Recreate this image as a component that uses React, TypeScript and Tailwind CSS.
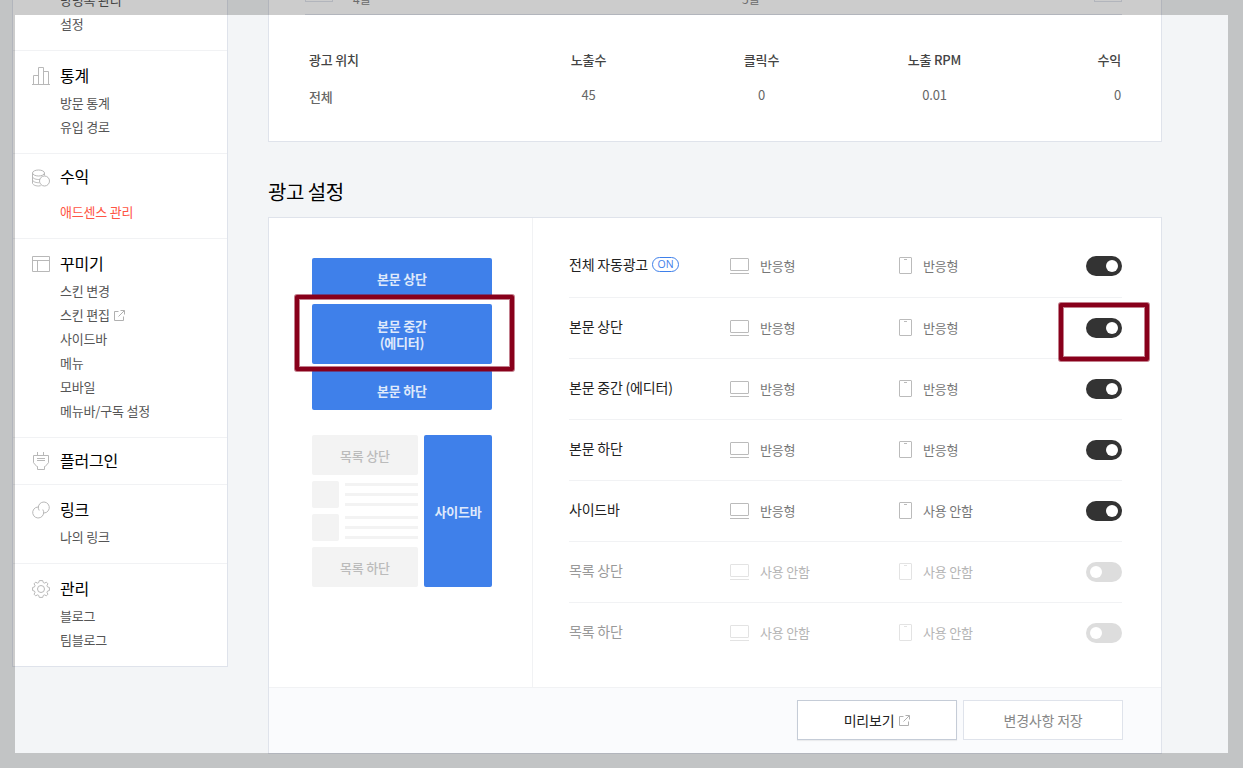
import React from "react";

type MenuItem = { label: string; active?: boolean; external?: boolean };

type MenuSection = {
  title: string;
  icon: React.ReactNode;
  items: MenuItem[];
  headClass?: string;
};

const ExternalIcon = ({ className = "" }: { className?: string }) => (
  <svg
    className={className}
    width="11"
    height="11"
    viewBox="0 0 11 11"
    fill="none"
    stroke="#b0b0b0"
  >
    <path d="M4.500 1.500h-4v9h9V6.500" />
    <path d="M6.500.5h4v4M10.300.7L4.500 6.500" />
  </svg>
);

const iconProps = {
  width: 18,
  height: 18,
  viewBox: "0 0 18 18",
  fill: "none",
  stroke: "#b8b8b8",
};

const StatsIcon = () => (
  <svg {...iconProps}>
    <path d="M0 17.5h18M1.5 17V8.5h5M6.5 17V.5h5V17M11.5 4.5h5V17" />
  </svg>
);

const CoinsIcon = () => (
  <svg {...iconProps} className="relative top-px">
    <ellipse cx="6.5" cy="4" rx="6" ry="3" />
    <path d="M.5 4v10c0 1.600 2.700 3 6 3 .8 0 1.500-.1 2.200-.3M.5 7.500c0 1.600 2.700 3 6 3 .6 0 1.100 0 1.600-.1M.5 10.700c0 1.600 2.700 3 6 3h.8M12.500 4V6.500" />
    <circle cx="12.500" cy="12" r="5" />
  </svg>
);

const SkinIcon = () => (
  <svg {...iconProps}>
    <path d="M.5 1.5h17v15H.5zM.5 5.5h17M5.500 5.500v11" />
  </svg>
);

const PluginIcon = () => (
  <svg {...iconProps}>
    <path d="M5.500 0v3.500M11.500 0v3.500M1.500 3.500h15v7.200l-3.300 3.800h-.7v3h-7v-3h-.7L1.500 10.700zM5 6.500h8M5 8.500h8" />
  </svg>
);

const LinkIcon = () => (
  <svg {...iconProps}>
    <path d="M7.200 9.500A5.500 5.500 0 1 1 12 12" />
    <path d="M10.800 8.500A5.500 5.500 0 1 1 6 6" />
  </svg>
);

const GearIcon = () => (
  <svg {...iconProps}>
    <circle cx="9" cy="9" r="3.500" />
    <path d="M7.300.6h3.400l.6 2 1.200.5 1.900-.9 1.500 1.600-.9 1.800.5 1.300 1.900.6v3l-1.900.6-.5 1.300.9 1.800-1.500 1.600-1.900-.9-1.200.5-.6 2H7.300l-.6-2-1.200-.5-1.900.9-1.500-1.600.9-1.800-.5-1.300-1.900-.6v-3l1.900-.6.5-1.300-.9-1.800 1.500-1.600 1.900.9 1.200-.5z" />
  </svg>
);

const sections: MenuSection[] = [
  {
    title: "통계",
    icon: <StatsIcon />,
    items: [{ label: "방문 통계" }, { label: "유입 경로" }],
  },
  {
    title: "수익",
    icon: <CoinsIcon />,
    items: [{ label: "애드센스 관리", active: true }],
    headClass: "-mt-0.5 mb-2",
  },
  {
    title: "꾸미기",
    icon: <SkinIcon />,
    items: [
      { label: "스킨 변경" },
      { label: "스킨 편집", external: true },
      { label: "사이드바" },
      { label: "메뉴" },
      { label: "모바일" },
      { label: "메뉴바/구독 설정" },
    ],
  },
  {
    title: "플러그인",
    icon: <PluginIcon />,
    items: [],
    headClass: "-mt-0.5 -mb-1.5",
  },
  { title: "링크", icon: <LinkIcon />, items: [{ label: "나의 링크" }] },
  {
    title: "관리",
    icon: <GearIcon />,
    items: [{ label: "블로그" }, { label: "팀블로그" }],
  },
];

const MenuLink = ({ item }: { item: MenuItem }) => (
  <li
    className={`flex items-center pl-[47px] text-[13px] leading-6 ${
      item.active ? "text-[#ff5544]" : "text-[#555]"
    }`}
  >
    {item.label}
    {item.external && <ExternalIcon className="ml-1" />}
  </li>
);

const Sidebar = () => (
  <aside className="-mt-3 w-[216px] shrink-0 self-start border border-t-0 border-[#dfe3eb] bg-white">
    <ul className="border-b border-[#f1f2f4] pb-3.5">
      <MenuLink item={{ label: "방명록 관리" }} />
      <MenuLink item={{ label: "설정" }} />
    </ul>
    {sections.map((section) => (
      <div
        key={section.title}
        className="border-b border-[#f1f2f4] pt-3.5 pb-3.5 last:border-b-0"
      >
        <div
          className={`flex h-[26px] items-start pl-[19px] ${section.headClass ?? ""}`}
        >
          <span className="mt-0.5 w-7">{section.icon}</span>
          <h3 className="text-base leading-5 text-black">{section.title}</h3>
        </div>
        <ul>
          {section.items.map((item) => (
            <MenuLink key={item.label} item={item} />
          ))}
        </ul>
      </div>
    ))}
  </aside>
);

const Report = () => (
  <section className="h-[142px] border-x border-b border-[#dfe3eb] bg-white pr-[39px] pl-9">
    <div className="flex h-[15px] items-start border-b border-[#dfe3eb] text-xs leading-5 text-[#888]">
      <span className="-mt-[26px] h-7 w-7 border border-[#dfe3eb]" />
      <span className="-mt-[11px] ml-5 w-[389px]">4월</span>
      <span className="-mt-[11px]">5월</span>
      <span className="-mt-[26px] ml-auto h-7 w-7 border border-[#dfe3eb]" />
    </div>
    <div className="mt-[33px] ml-1 grid grid-cols-[193px_173px_173px_173px_100px] text-center text-[13px] leading-6 font-medium text-[#444]">
      <span className="text-left">광고 위치</span>
      <span>노출수</span>
      <span>클릭수</span>
      <span>노출 RPM</span>
      <span className="text-right">수익</span>
    </div>
    <div className="mt-[11px] ml-1 grid grid-cols-[193px_173px_173px_173px_100px] text-center text-[13px] leading-6 text-[#666]">
      <span className="mt-0.5 text-left font-medium">전체</span>
      <span>45</span>
      <span>0</span>
      <span>0.01</span>
      <span className="text-right">0</span>
    </div>
  </section>
);

const ListLines = () => (
  <div className="flex h-[27px] gap-1.5">
    <div className="w-[27px] rounded-xs bg-[#f3f3f3]" />
    <div className="flex flex-1 flex-col gap-[7px] pt-0.5">
      <div className="h-[3px] bg-[#f3f3f3]" />
      <div className="h-[3px] bg-[#f3f3f3]" />
      <div className="h-[3px] bg-[#f3f3f3]" />
    </div>
  </div>
);

const Placement = () => (
  <div className="w-[264px] border-r border-[#f1f2f4] pt-10 pl-[43px] text-[13px] leading-[17px] font-bold text-[#dfe9fb]">
    <div className="flex w-[180px] flex-col gap-1.5 text-center">
      <div className="flex h-10 items-center justify-center rounded-xs bg-[#3f80ea]">
        본문 상단
      </div>
      <div className="flex h-[60px] items-center justify-center rounded-xs bg-[#3f80ea]">
        본문 중간
        <br />
        (에디터)
      </div>
      <div className="flex h-10 items-center justify-center rounded-xs bg-[#3f80ea]">
        본문 하단
      </div>
    </div>
    <div className="mt-[25px] flex h-[152px] w-[180px] gap-1.5">
      <div className="flex w-[106px] flex-col gap-1.5">
        <div className="flex h-10 items-center justify-center rounded-xs bg-[#f3f3f3] font-medium text-[#bbb]">
          목록 상단
        </div>
        <ListLines />
        <ListLines />
        <div className="flex h-10 items-center justify-center rounded-xs bg-[#f3f3f3] font-medium text-[#bbb]">
          목록 하단
        </div>
      </div>
      <div className="flex flex-1 items-center justify-center rounded-xs bg-[#3f80ea]">
        사이드바
      </div>
    </div>
  </div>
);

const MonitorIcon = () => (
  <svg width="19" height="16" viewBox="0 0 19 16" fill="none" stroke="#bbb">
    <rect x=".5" y=".5" width="18" height="12" rx=".5" />
    <path d="M0 15.500h19" />
  </svg>
);

const PhoneIcon = () => (
  <svg width="13" height="17" viewBox="0 0 13 17" fill="none" stroke="#bbb">
    <rect x=".5" y=".5" width="12" height="16" rx=".5" />
    <path d="M5 2.500h3" />
  </svg>
);

const Toggle = ({ on }: { on: boolean }) => (
  <span
    className={`flex h-5 w-9 items-center rounded-full px-1 ${
      on ? "justify-end bg-[#333]" : "justify-start bg-[#ddd]"
    }`}
  >
    <span className="size-3 rounded-full bg-white" />
  </span>
);

const adRows = [
  { name: "전체 자동광고", pc: "반응형", mobile: "반응형", on: true, auto: true },
  { name: "본문 상단", pc: "반응형", mobile: "반응형", on: true },
  { name: "본문 중간 (에디터)", pc: "반응형", mobile: "반응형", on: true },
  { name: "본문 하단", pc: "반응형", mobile: "반응형", on: true },
  { name: "사이드바", pc: "반응형", mobile: "사용 안함", on: true },
  { name: "목록 상단", pc: "사용 안함", mobile: "사용 안함", on: false },
  { name: "목록 하단", pc: "사용 안함", mobile: "사용 안함", on: false },
];

const AdList = () => (
  <ul className="flex-1 pt-[18px] pr-[39px] pl-9">
    {adRows.map((row) => (
      <li
        key={row.name}
        className="flex h-[61px] items-start border-b border-[#f1f2f4] pt-5 first:h-[62px] last:border-b-0"
      >
        <div
          className={`-mt-px flex w-[161px] items-center text-sm leading-[18px] ${
            row.on ? "text-[#222]" : "text-[#999]"
          }`}
        >
          {row.name}
          {row.auto && (
            <span className="mt-px ml-1 h-[15px] w-[27px] rounded-full border border-[#3f80ea] text-center font-['Open_Sans'] text-[10.5px] leading-[13px] tracking-normal text-[#3f80ea]">
              ON
            </span>
          )}
        </div>
        <div
          className={`flex flex-1 text-[13px] leading-5 ${
            row.on ? "text-[#777]" : "text-[#b5b5b5]"
          }`}
        >
          <span className={`mt-0.5 w-[30px] ${row.on ? "" : "opacity-40"}`}>
            <MonitorIcon />
          </span>
          <span className="w-[139px]">{row.pc}</span>
          <span className={`mt-px w-6 ${row.on ? "" : "opacity-40"}`}>
            <PhoneIcon />
          </span>
          <span>{row.mobile}</span>
        </div>
        <Toggle on={row.on} />
      </li>
    ))}
  </ul>
);

// Dark red boxes drawn over the page to point at a block and its switch
const Highlights = () => (
  <svg
    className="absolute top-0 left-0"
    width="1243"
    height="768"
    fill="none"
    stroke="#88001b"
    strokeLinejoin="round"
  >
    <rect x="297" y="297" width="215" height="72" strokeWidth="6" opacity=".5" />
    <rect x="297" y="297" width="215" height="72" strokeWidth="4" />
    <rect x="1061" y="305" width="86" height="54" strokeWidth="6" opacity=".5" />
    <rect x="1061" y="305" width="86" height="54" strokeWidth="4" />
  </svg>
);

const App = () => {
  return (
    <div className="relative flex h-[768px] w-[1243px] gap-10 overflow-hidden bg-[#f3f5f7] pl-3 font-['Noto_Sans_CJK_KR',sans-serif] tracking-[-0.2px]">
      <Sidebar />
      <main className="w-[894px]">
        <Report />
        <h2 className="mt-[35px] mb-[10px] text-xl leading-[30px] tracking-[-0.5px] text-black">
          광고 설정
        </h2>
        <section className="border border-[#dfe3eb] bg-white">
          <div className="flex h-[469px]">
            <Placement />
            <AdList />
          </div>
          <div className="flex h-[66px] justify-end gap-1.5 border-t border-[#f1f2f4] bg-[#fafbfd] pt-3 pr-[38px]">
            <button className="flex h-10 w-40 items-center justify-center border border-[#c5ccd7] bg-white text-sm text-[#222] shadow-[0_1px_1px_rgba(0,0,0,0.06)]">
              미리보기
              <ExternalIcon className="ml-[5px]" />
            </button>
            <button className="h-10 w-40 border border-[#dfe3eb] bg-white text-sm text-[#888]">
              변경사항 저장
            </button>
          </div>
        </section>
      </main>
      <Highlights />
      {/* Dimmed frame */}
      <div className="absolute inset-0 border-15 border-black/20" />
    </div>
  );
};

export default App;
